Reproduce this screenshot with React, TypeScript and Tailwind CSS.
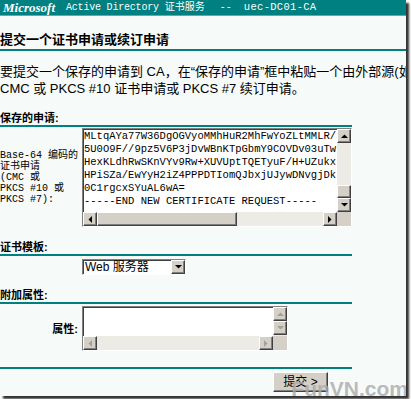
import React from "react";

const mono = { fontFamily: '"Liberation Mono", "Noto Sans CJK SC", monospace' };
const cjkSans = { fontFamily: '"Liberation Sans", "Noto Sans CJK SC", sans-serif' };

// 经典 Windows 凸起按钮边框
const raised =
  "border border-t-white border-l-white border-r-[#404040] border-b-[#404040] bg-[#d4d0c8] shadow-[inset_-1px_-1px_0_#808080]";
// 凹陷输入框边框
const inset =
  "border border-t-[#808080] border-l-[#808080] border-r-white border-b-white shadow-[inset_1px_1px_0_#404040]";

function Arrow({ dir, dim }: { dir: "up" | "down" | "left" | "right"; dim?: boolean }) {
  const pts = {
    up: "0,4 7,4 3.5,0.5",
    down: "0,0 7,0 3.5,3.5",
    left: "4,0 4,7 0.5,3.5",
    right: "0,0 0,7 3.5,3.5",
  }[dir];
  const vertical = dir === "up" || dir === "down";
  return (
    <svg width={vertical ? 7 : 4} height={vertical ? 4 : 7} viewBox={vertical ? "0 0 7 4" : "0 0 4 7"}>
      <polygon points={pts} fill={dim ? "#a0a0a0" : "#000"} />
    </svg>
  );
}

function ScrollBtn({ dir, dim }: { dir: "up" | "down" | "left" | "right"; dim?: boolean }) {
  return (
    <div className={`flex h-[14px] w-[14px] shrink-0 items-center justify-center ${raised}`}>
      <Arrow dir={dir} dim={dim} />
    </div>
  );
}

const requestLines = [
  "MLtqAYa77W36DgOGVyoMMhHuR2MhFwYoZLtMMLR/",
  "5U0O9F//9pz5V6P3jDvWBnKTpGbmY9COVDv03uTw",
  "HexKLdhRwSKnVYv9Rw+XUVUptTQETyuF/H+UZukx",
  "HPiSZa/EwYyH2iZ4PPPDTIomQJbxjUJywDNvgjDk",
  "0C1rgcxSYuAL6wA=",
  "-----END NEW CERTIFICATE REQUEST-----",
];

function SectionTitle({ children }: { children: React.ReactNode }) {
  return (
    <>
      <div className="text-[11px] font-bold leading-[12px] text-black" style={cjkSans}>
        {children}
      </div>
      <div className="mt-[1px] h-[2px] w-[352px] bg-[#008080]" />
    </>
  );
}

export default function App() {
  return (
    <div className="relative h-[399px] w-[411px] overflow-hidden bg-white">
      <div className="relative h-[396px] w-[406px] overflow-hidden bg-[#f6fbf9] shadow-[3px_3px_2px_rgba(0,0,0,0.8)]">
        {/* 顶部标题栏 */}
        <div className="flex h-[15px] items-center whitespace-nowrap bg-[#008080] pl-[3px] text-white">
          <span
            className="w-[60px] text-[13px] font-bold italic leading-none"
            style={{ fontFamily: '"Liberation Serif", serif' }}
          >
            Microsoft
          </span>
          <span className="ml-[3px] text-[10px] leading-none tracking-[-0.2px]" style={mono}>
            Active Directory
          </span>
          <span className="ml-[6px] text-[10px] leading-none" style={mono}>
            证书服务
          </span>
          <span className="ml-[15px] text-[10px] leading-none" style={mono}>
            --
          </span>
          <span className="ml-[12px] text-[10.5px] leading-none tracking-[0.3px]" style={mono}>
            uec-DC01-CA
          </span>
        </div>
        <div className="h-[1px] bg-[#5aaeae]" />

        {/* 页面标题 */}
        <h1 className="mt-[16px] text-[13px] font-bold leading-[16px] text-black" style={cjkSans}>
          提交一个证书申请或续订申请
        </h1>
        <div className="mt-[1px] h-[2px] bg-[#008080]" />

        {/* 说明文字 */}
        <p className="mt-[12px] whitespace-nowrap text-[13px] leading-[17px] text-black" style={cjkSans}>
          要提交一个保存的申请到 CA，在“保存的申请”框中粘贴一个由外部源(如 Web 服务器)生成的 base-64 编码的
          <br />
          CMC 或 PKCS #10 证书申请或 PKCS #7 续订申请。
        </p>

        {/* 保存的申请 */}
        <div className="mt-[15px]">
          <SectionTitle>保存的申请:</SectionTitle>
        </div>
        <div className="mt-[1px] flex items-center">
          <div className="w-[82px] text-[10px] leading-[11px] text-black" style={mono}>
            Base-64 编码的
            <br />
            证书申请
            <br />
            (CMC 或
            <br />
            PKCS #10 或
            <br />
            PKCS #7):
          </div>
          <div className={`flex h-[99px] w-[270px] flex-col bg-white ${inset}`}>
            <div className="flex min-h-0 flex-1">
              <div className="flex-1 overflow-hidden pl-[1px] pt-[1px]">
                {requestLines.map((l, i) => (
                  <div key={i} className="whitespace-nowrap text-[10.5px] leading-[13px] text-black" style={mono}>
                    {l}
                  </div>
                ))}
              </div>
              <div className="flex w-[14px] flex-col bg-[#ecebe5]">
                <ScrollBtn dir="up" />
                <div className="flex-1" />
                <div className={`h-[13px] w-[14px] ${raised}`} />
                <ScrollBtn dir="down" />
              </div>
            </div>
            <div className="flex h-[14px] bg-[#ecebe5]">
              <ScrollBtn dir="left" />
              <div className={`h-[14px] w-[140px] ${raised}`} />
              <div className="flex-1" />
              <ScrollBtn dir="right" />
              <div className="h-[14px] w-[14px] bg-[#d4d0c8]" />
            </div>
          </div>
        </div>

        {/* 证书模板 */}
        <div className="mt-[14px]">
          <SectionTitle>证书模板:</SectionTitle>
        </div>
        <div className="mt-[3px] flex">
          <div className="w-[82px]" />
          <div className={`flex h-[16px] w-[104px] items-center bg-white ${inset}`}>
            <span className="flex-1 pl-[2px] text-[12px] leading-none text-black" style={cjkSans}>
              Web 服务器
            </span>
            <div className={`flex h-[14px] w-[14px] items-center justify-center ${raised}`}>
              <Arrow dir="down" />
            </div>
          </div>
        </div>

        {/* 附加属性 */}
        <div className="mt-[14px]">
          <SectionTitle>附加属性:</SectionTitle>
        </div>
        <div className="mt-[2px] flex items-center">
          <div className="w-[82px] pr-[4px] text-right text-[11px] font-bold leading-[12px] text-black" style={cjkSans}>
            属性:
          </div>
          <div className={`flex h-[45px] w-[206px] flex-col bg-white ${inset}`}>
            <div className="flex min-h-0 flex-1">
              <div className="flex-1" />
              <div className="flex w-[14px] flex-col bg-[#ecebe5]">
                <ScrollBtn dir="up" dim />
                <ScrollBtn dir="down" dim />
              </div>
            </div>
            <div className="flex h-[14px] bg-[#ecebe5]">
              <ScrollBtn dir="left" dim />
              <div className="flex-1" />
              <ScrollBtn dir="right" dim />
              <div className="h-[14px] w-[14px] bg-[#d4d0c8]" />
            </div>
          </div>
        </div>

        {/* 提交 */}
        <div className="mt-[16px] h-[2px] w-[352px] bg-[#008080]" />
        <div className="mt-[3px] flex w-[328px] justify-end">
          <button
            className={`h-[20px] w-[55px] text-[12px] leading-none text-black ${raised}`}
            style={cjkSans}
          >
            提交 &gt;
          </button>
        </div>

        {/* 水印 */}
        <div
          className="pointer-events-none absolute bottom-[-3px] right-[-2px] text-[21px] font-bold leading-none text-[#a8a8a8]/80"
          style={{ fontFamily: '"Liberation Sans", Arial, sans-serif' }}
        >
          FunVN.com
        </div>
      </div>
    </div>
  );
}
